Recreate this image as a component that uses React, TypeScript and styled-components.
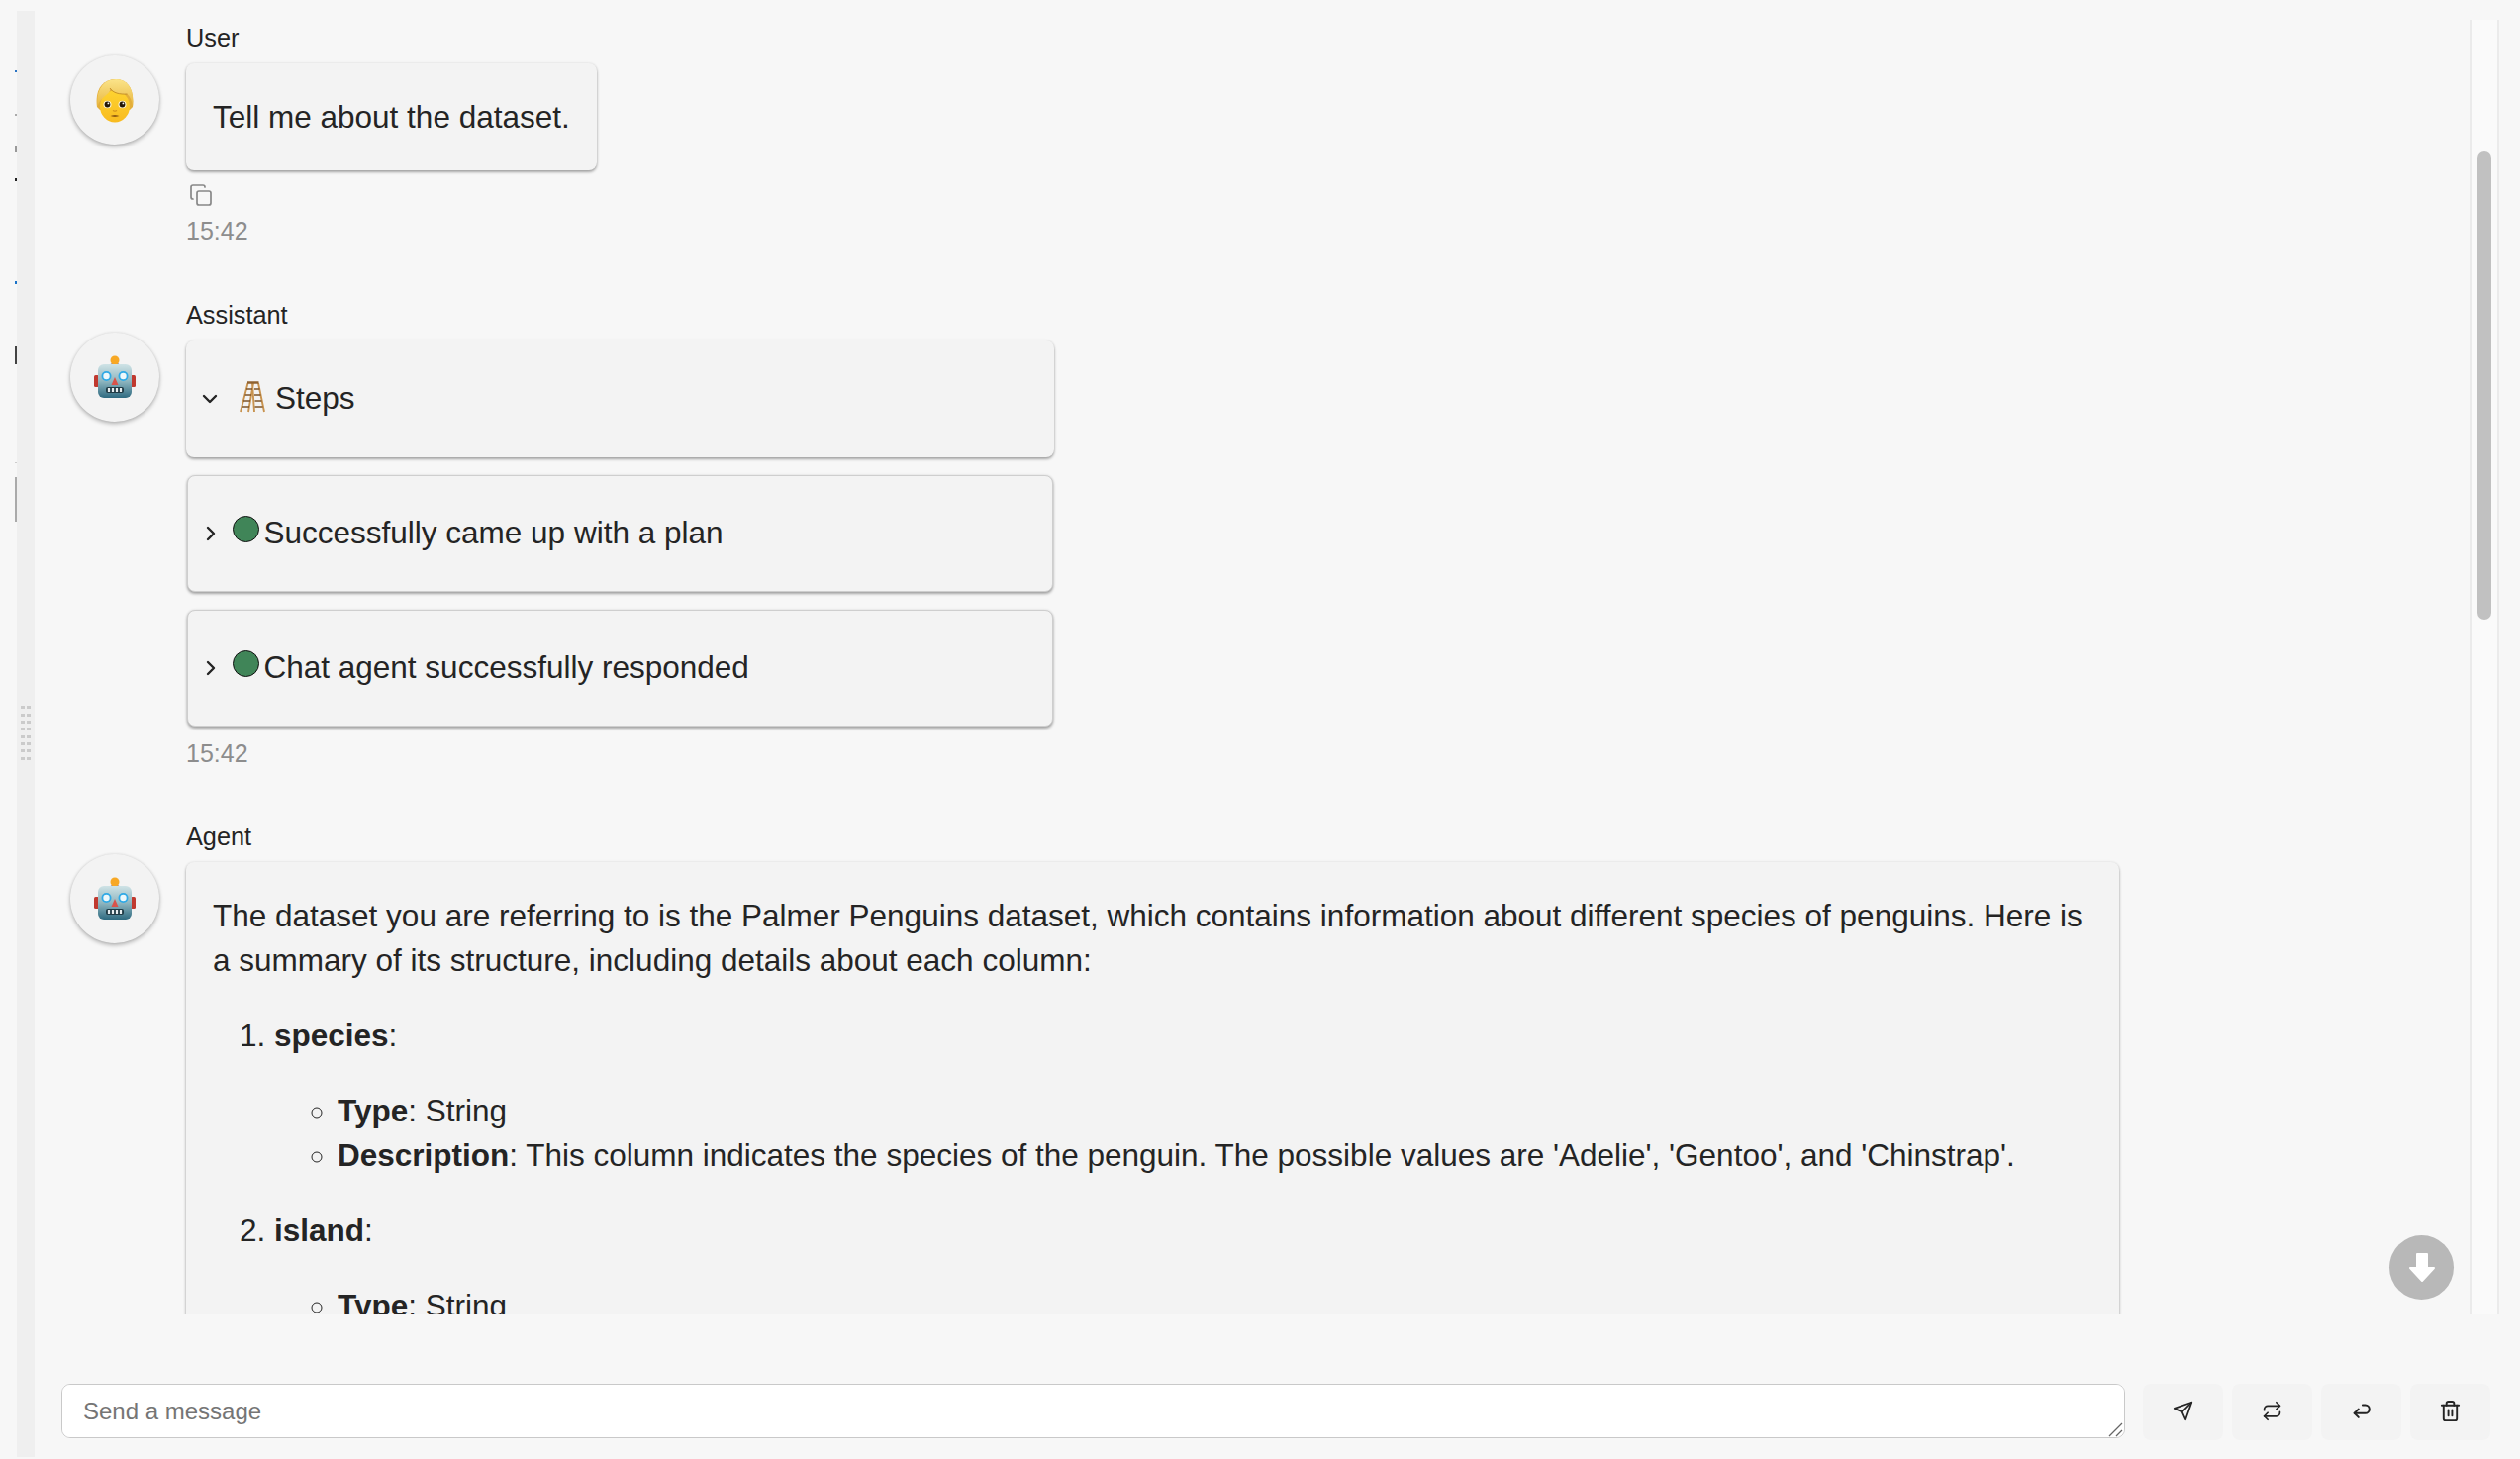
import styled, { createGlobalStyle } from "styled-components";
import { ChevronDown, ChevronRight, Copy, Repeat, Trash2 } from "lucide-react";
import { FiSend } from "react-icons/fi";

const GlobalStyle = createGlobalStyle`
  html, body {
    margin: 0;
    height: 100%;
    overflow: hidden;
    background: #f7f7f7;
  }
  body {
    font-family: "Liberation Sans", Arial, sans-serif;
    color: #242424;
  }
`;

const Page = styled.div`
  display: flex;
  width: 2546px;
  height: 1474px;
  overflow: hidden;
`;

const SidebarEdge = styled.div`
  width: 17px;
  flex: none;
  display: flex;
  flex-direction: column;
  align-items: flex-end;
  padding-top: 71px;
  box-sizing: border-box;
`;

const EdgeMark = styled.div<{ $h: number; $gap: number; $color: string }>`
  width: 2px;
  height: ${(p) => p.$h}px;
  margin-bottom: ${(p) => p.$gap}px;
  background: ${(p) => p.$color};
`;

const Handle = styled.div`
  width: 18px;
  flex: none;
  margin: 11px 0 2px;
  background: #efefef;
  display: flex;
  align-items: center;
  justify-content: center;
  padding-bottom: 2px;
  box-sizing: border-box;
`;

const Grip = styled.div`
  display: grid;
  grid-template-columns: 4px 4px;
  grid-auto-rows: 3px;
  column-gap: 2px;
  row-gap: 4.4px;
`;

const GripDot = styled.span`
  background: #cbcbcb;
`;

const Main = styled.div`
  flex: 1;
  min-width: 0;
  display: flex;
  flex-direction: column;
`;

const ChatArea = styled.div`
  position: relative;
  display: flex;
  height: 1313px;
  margin: 15px 21px 0 0;
`;

const Messages = styled.div`
  flex: 1;
  min-width: 0;
  overflow: hidden;
  padding: 8px 354px 0 36px;
  display: flex;
  flex-direction: column;
  gap: 54px;
`;

const Track = styled.div`
  width: 30px;
  flex: none;
  box-sizing: border-box;
  margin-top: 5px;
  border-left: 2px solid #ebebeb;
  border-right: 2px solid #ebebeb;
  background: #fafafa;
  padding: 133px 6px 0;
`;

const Thumb = styled.div`
  height: 473px;
  border-radius: 8px;
  background: #c1c1c1;
`;

const ScrollDown = styled.button`
  position: absolute;
  left: 2379px;
  top: 1233px;
  width: 65px;
  height: 65px;
  padding: 0;
  border: 0;
  border-radius: 50%;
  background: #b8b8b8;
  display: flex;
  align-items: center;
  justify-content: center;
`;

const Message = styled.div<{ $after?: number }>`
  display: flex;
  gap: 27px;
  flex: none;
  margin-bottom: ${(p) => p.$after ?? 0}px;
`;

const Avatar = styled.div`
  width: 90px;
  height: 90px;
  flex: none;
  margin-top: 33px;
  border-radius: 50%;
  background: #f3f3f3;
  box-shadow: 0 2px 4px rgba(0, 0, 0, 0.28), 0 0 3px rgba(0, 0, 0, 0.08);
  display: flex;
  align-items: center;
  justify-content: center;
`;

const Body = styled.div`
  flex: 1;
  min-width: 0;
  display: flex;
  flex-direction: column;
  align-items: flex-start;
`;

const Author = styled.div`
  font-size: 25.3px;
  line-height: 30px;
  margin-bottom: 11px;
`;

const Bubble = styled.div`
  box-sizing: border-box;
  padding: 32px 27px 31px;
  border-radius: 8px;
  background: #f3f3f3;
  font-size: 31.5px;
  line-height: 44.8px;
  box-shadow: 0 2px 3px rgba(0, 0, 0, 0.32), 0 0 3px rgba(0, 0, 0, 0.1);
`;

const Para = styled.p`
  margin: 0;
`;

const Numbered = styled.ol`
  margin: 32px 0 0;
  padding-left: 62px;
`;

const NumberedItem = styled.li`
  margin-top: 31px;
  &:first-child {
    margin-top: 0;
  }
`;

const Bullets = styled.ul`
  list-style-type: circle;
  margin: 31px 0 0;
  padding-left: 64px;
`;

const Steps = styled.div`
  display: flex;
  flex-direction: column;
  gap: 18px;
  width: 877px;
  align-items: center;
`;

const StepBox = styled.div<{ $nested?: boolean }>`
  box-sizing: border-box;
  width: ${(p) => (p.$nested ? "875px" : "877px")};
  height: 118px;
  display: flex;
  align-items: center;
  padding-left: ${(p) => (p.$nested ? "10.5px" : "12px")};
  border-radius: 8px;
  background: #f3f3f3;
  font-size: 31.5px;
  border: ${(p) => (p.$nested ? "1.5px solid #cecece" : "0")};
  box-shadow: 0 2px 3px rgba(0, 0, 0, 0.32), 0 0 3px rgba(0, 0, 0, 0.1);
`;

const StepTitle = styled.span`
  margin-left: 10px;
`;

const Ladder = styled.svg`
  margin: -4px 0 0 18px;
  flex: none;
`;

const StatusDot = styled.span`
  width: 27px;
  height: 27px;
  flex: none;
  box-sizing: border-box;
  margin: -9px 5px 0 10px;
  border-radius: 50%;
  background: #408558;
  border: 1.5px solid #111;
`;

const CopyButton = styled.div`
  margin: 13px 0 9px 3px;
  height: 24px;
  color: #888;
`;

const Time = styled.div<{ $gap?: number }>`
  font-size: 25px;
  line-height: 30px;
  color: #8d8d8d;
  margin-top: ${(p) => p.$gap ?? 0}px;
`;

const Composer = styled.form`
  display: flex;
  align-items: flex-start;
  gap: 9px;
  margin: 70px 30px 0 27px;
`;

const InputWrap = styled.div`
  position: relative;
  flex: 1;
  min-width: 0;
  height: 55px;
  margin-right: 9px;
`;

const Input = styled.textarea`
  display: block;
  width: 100%;
  height: 100%;
  box-sizing: border-box;
  margin: 0;
  padding: 12px 21px;
  border: 1.5px solid #c9c9c9;
  border-radius: 9px;
  background: #fff;
  font-family: "Liberation Sans", Arial, sans-serif;
  font-size: 24px;
  line-height: 30px;
  color: #242424;
  outline: none;
  resize: none;
  &::placeholder {
    color: #757575;
  }
`;

const ResizeGrip = styled.svg`
  position: absolute;
  right: 2px;
  bottom: 1px;
`;

const ActionButton = styled.button`
  width: 81px;
  height: 57px;
  flex: none;
  padding: 0 0 3px;
  border: 0;
  border-radius: 8px;
  background: #f3f3f3;
  color: #242424;
  display: flex;
  align-items: center;
  justify-content: center;
`;

function PersonEmoji() {
  return (
    <svg width="38" height="45" viewBox="0 0 38 45">
      <defs>
        <linearGradient id="hairShade" x1="0" y1="0" x2="0" y2="1">
          <stop offset="0" stopColor="#fbe48a" />
          <stop offset="1" stopColor="#e8b63f" />
        </linearGradient>
        <linearGradient id="faceShade" x1="0" y1="0" x2="0" y2="1">
          <stop offset="0" stopColor="#fed330" />
          <stop offset="1" stopColor="#f8bb20" />
        </linearGradient>
      </defs>
      <path d="M1 29C-1.500 11 7 1 20 1c12 0 19 10 17 28l-3 3H4z" fill="#e3ae3a" />
      <ellipse cx="19" cy="28.500" rx="15" ry="16" fill="url(#faceShade)" />
      <path d="M1.500 29C-.5 11 8 1 20 1c12 0 19 10 17 27.500-1-6-2.500-10-5.500-12.500-7 .5-14-1-17-6 0 7-10 8-13 19z" fill="url(#hairShade)" />
      <path d="M14 10c3 5 10 6.500 17.500 6" fill="none" stroke="#b98422" strokeWidth="0.800" />
      <ellipse cx="11.500" cy="26.500" rx="4" ry="3.800" fill="#fff7d6" />
      <ellipse cx="26.500" cy="26.500" rx="4" ry="3.800" fill="#fff7d6" />
      <circle cx="11.500" cy="26.500" r="2.900" fill="#241806" />
      <circle cx="26.500" cy="26.500" r="2.900" fill="#241806" />
      <circle cx="12.400" cy="25.400" r="0.900" fill="#fff" />
      <circle cx="27.400" cy="25.400" r="0.900" fill="#fff" />
      <path d="M17 32.500q2 1.300 4 0" fill="none" stroke="#d0901a" strokeWidth="1.200" />
      <path d="M14.500 38q4.500 1.600 9 0q-4.500 -1.400 -9 0z" fill="#6e3a0c" />
    </svg>
  );
}

function RobotEmoji() {
  return (
    <svg width="44" height="44" viewBox="0 0 44 44">
      <defs>
        <linearGradient id="robotFace" x1="0" y1="0" x2="0" y2="1">
          <stop offset="0" stopColor="#cfe3e6" />
          <stop offset="0.5" stopColor="#8fb6c0" />
          <stop offset="1" stopColor="#2e6a80" />
        </linearGradient>
      </defs>
      <rect x="1" y="20" width="5" height="12" rx="1.500" fill="#c0392f" />
      <rect x="38" y="20" width="5" height="12" rx="1.500" fill="#c0392f" />
      <path d="M16 10q6-5 12 0v3H16z" fill="#5b4a8e" />
      <circle cx="22" cy="5" r="4.500" fill="#f7a825" />
      <rect x="5" y="9" width="34" height="34" rx="6" fill="url(#robotFace)" />
      <circle cx="13.500" cy="21" r="5" fill="#2fa9e6" />
      <circle cx="30.500" cy="21" r="5" fill="#2fa9e6" />
      <circle cx="13.500" cy="21" r="3.200" fill="#eef8fb" />
      <circle cx="30.500" cy="21" r="3.200" fill="#eef8fb" />
      <path d="M22 22l3.500 8h-7z" fill="#d9534a" />
      <rect x="13" y="32" width="18" height="6" rx="2" fill="#1f3a45" />
      <path d="M16 33v4M20 33v4M24 33v4M28 33v4" stroke="#e8eef0" strokeWidth="2.200" />
    </svg>
  );
}

function LadderEmoji() {
  return (
    <Ladder width="26" height="32" viewBox="0 0 26 32">
      <path d="M1 31L8.500 2M9 31L14 2M15 31L13 2M25 31L19 2" stroke="#c8934f" strokeWidth="1.900" fill="none" />
      <path d="M8 1.500h11.500" stroke="#8f6230" strokeWidth="2.500" />
      <path d="M7 8h6M5.500 14h6.500M4 20h7M2.500 26h7.500M15 8h5.500M15 14h6.500M15.500 20h7M15.500 26h8" stroke="#7d5429" strokeWidth="1.400" />
    </Ladder>
  );
}

function UndoIcon() {
  return (
    <svg width="22" height="22" viewBox="0 0 24 24" fill="none" stroke="currentColor" strokeWidth="2.200" strokeLinecap="round" strokeLinejoin="round">
      <path d="M8.500 10.500L4 15l4.500 4.500" />
      <path d="M4 15h12a4.500 4.500 0 0 0 0-9h-3" />
    </svg>
  );
}

export default function App() {
  const gripDots = Array.from({ length: 16 });
  return (
    <Page>
      <GlobalStyle />
      <SidebarEdge>
        <EdgeMark $h={2} $gap={42} $color="#2a74c4" />
        <EdgeMark $h={2} $gap={30} $color="#aaa" />
        <EdgeMark $h={7} $gap={26} $color="#999" />
        <EdgeMark $h={3} $gap={101} $color="#222" />
        <EdgeMark $h={3} $gap={63} $color="#1a73c8" />
        <EdgeMark $h={18} $gap={99} $color="#444" />
        <EdgeMark $h={1} $gap={14} $color="#ccc" />
        <EdgeMark $h={45} $gap={0} $color="#aaa" />
      </SidebarEdge>
      <Handle>
        <Grip>
          {gripDots.map((_, i) => (
            <GripDot key={i} />
          ))}
        </Grip>
      </Handle>
      <Main>
        <ChatArea>
          <Messages>
            <Message $after={1}>
              <Avatar>
                <PersonEmoji />
              </Avatar>
              <Body>
                <Author>User</Author>
                <Bubble>Tell me about the dataset.</Bubble>
                <CopyButton>
                  <Copy size={24} strokeWidth={1.7} />
                </CopyButton>
                <Time>15:42</Time>
              </Body>
            </Message>
            <Message>
              <Avatar>
                <RobotEmoji />
              </Avatar>
              <Body>
                <Author>Assistant</Author>
                <Steps>
                  <StepBox>
                    <ChevronDown size={24} strokeWidth={2.4} />
                    <LadderEmoji />
                    <StepTitle>Steps</StepTitle>
                  </StepBox>
                  <StepBox $nested>
                    <ChevronRight size={24} strokeWidth={2.4} />
                    <StatusDot />
                    Successfully came up with a plan
                  </StepBox>
                  <StepBox $nested>
                    <ChevronRight size={24} strokeWidth={2.4} />
                    <StatusDot />
                    Chat agent successfully responded
                  </StepBox>
                </Steps>
                <Time $gap={12}>15:42</Time>
              </Body>
            </Message>
            <Message>
              <Avatar>
                <RobotEmoji />
              </Avatar>
              <Body>
                <Author>Agent</Author>
                <Bubble>
                  <Para>
                    The dataset you are referring to is the Palmer Penguins dataset, which contains information about
                    different species of penguins. Here is a summary of its structure, including details about each
                    column:
                  </Para>
                  <Numbered>
                    <NumberedItem>
                      <strong>species</strong>:
                      <Bullets>
                        <li>
                          <strong>Type</strong>: String
                        </li>
                        <li>
                          <strong>Description</strong>: This column indicates the species of the penguin. The possible
                          values are 'Adelie', 'Gentoo', and 'Chinstrap'.
                        </li>
                      </Bullets>
                    </NumberedItem>
                    <NumberedItem>
                      <strong>island</strong>:
                      <Bullets>
                        <li>
                          <strong>Type</strong>: String
                        </li>
                      </Bullets>
                    </NumberedItem>
                  </Numbered>
                </Bubble>
              </Body>
            </Message>
          </Messages>
          <Track>
            <Thumb />
          </Track>
          <ScrollDown type="button" aria-label="Scroll to bottom">
            <svg width="28" height="31" viewBox="0 0 28 31">
              <path d="M9 2h10v14h7L14 29 2 16h7z" fill="#fff" stroke="#fff" strokeWidth="2" strokeLinejoin="round" />
            </svg>
          </ScrollDown>
        </ChatArea>
        <Composer>
          <InputWrap>
            <Input placeholder="Send a message" />
            <ResizeGrip width="15" height="15" viewBox="0 0 15 15" stroke="#666" strokeWidth="1.300">
              <path d="M1 14L14 1M8 14L14 8" />
            </ResizeGrip>
          </InputWrap>
          <ActionButton type="button" aria-label="Send">
            <FiSend size={21} />
          </ActionButton>
          <ActionButton type="button" aria-label="Retry">
            <Repeat size={21} />
          </ActionButton>
          <ActionButton type="button" aria-label="Undo">
            <UndoIcon />
          </ActionButton>
          <ActionButton type="button" aria-label="Clear">
            <Trash2 size={23} />
          </ActionButton>
        </Composer>
      </Main>
    </Page>
  );
}
